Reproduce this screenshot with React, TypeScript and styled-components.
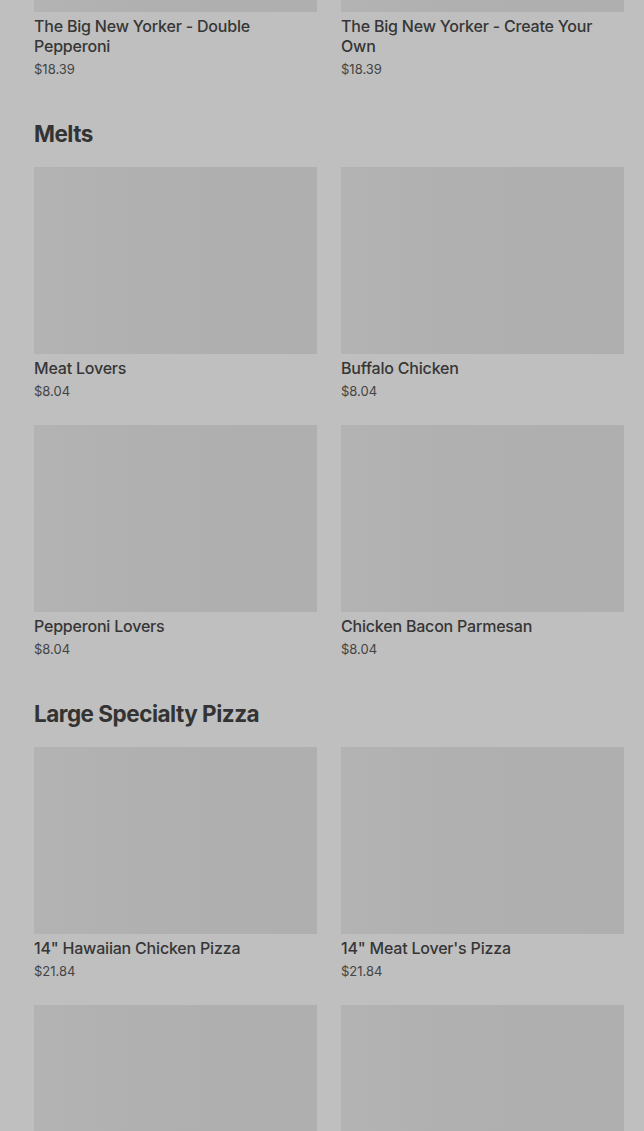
import styled, { createGlobalStyle } from 'styled-components';

const GlobalStyle = createGlobalStyle`
  html, body {
    margin: 0;
    padding: 0;
    background: #bfbfbf;
  }
  body {
    font-family: Inter, "Noto Sans", "Liberation Sans", sans-serif;
    overflow: hidden;
  }
`;

const Page = styled.main`
  width: 644px;
  height: 1131px;
  overflow: hidden;
  padding: 0 20px 0 34px;
  box-sizing: border-box;
  background: #bfbfbf;
`;

const Section = styled.section`
  margin-bottom: 39px;
`;

const Heading = styled.h2`
  margin: 0 0 17px;
  font-size: 22.5px;
  line-height: 32px;
  font-weight: 700;
  letter-spacing: -0.5px;
  color: #333333;
`;

const Grid = styled.div`
  display: grid;
  grid-template-columns: 283px 283px;
  column-gap: 24px;
  row-gap: 24px;
`;

const Card = styled.article`
  display: flex;
  flex-direction: column;
`;

const Thumb = styled.div<{ $height: number }>`
  height: ${({ $height }) => $height}px;
  background: linear-gradient(90deg, #b3b3b3 0%, #b0b0b0 40%, #afafaf 100%);
`;

const Name = styled.h3`
  margin: 4px 0 0;
  font-size: 16px;
  line-height: 20px;
  font-weight: 500;
  letter-spacing: -0.2px;
  color: #363636;
`;

const Price = styled.span`
  margin-top: 3px;
  font-size: 13px;
  line-height: 20px;
  color: #444444;
`;

interface Item {
  name?: string;
  price?: string;
}

const topItems: Item[] = [
  { name: 'The Big New Yorker - Double Pepperoni', price: '$18.39' },
  { name: 'The Big New Yorker - Create Your Own', price: '$18.39' },
];

const melts: Item[] = [
  { name: 'Meat Lovers', price: '$8.04' },
  { name: 'Buffalo Chicken', price: '$8.04' },
  { name: 'Pepperoni Lovers', price: '$8.04' },
  { name: 'Chicken Bacon Parmesan', price: '$8.04' },
];

// the last row runs past the bottom edge, only its pictures show
const specialty: Item[] = [
  { name: '14" Hawaiian Chicken Pizza', price: '$21.84' },
  { name: "14\" Meat Lover's Pizza", price: '$21.84' },
  {},
  {},
];

const MenuCard = ({ item, thumb = 187 }: { item: Item; thumb?: number }) => (
  <Card>
    <Thumb $height={thumb} />
    {item.name && <Name>{item.name}</Name>}
    {item.price && <Price>{item.price}</Price>}
  </Card>
);

export default function App() {
  return (
    <>
      <GlobalStyle />
      <Page>
        <Section>
          <Grid>
            {topItems.map((item, i) => (
              <MenuCard key={i} item={item} thumb={12} />
            ))}
          </Grid>
        </Section>
        <Section>
          <Heading>Melts</Heading>
          <Grid>
            {melts.map((item, i) => (
              <MenuCard key={i} item={item} />
            ))}
          </Grid>
        </Section>
        <Section>
          <Heading>Large Specialty Pizza</Heading>
          <Grid>
            {specialty.map((item, i) => (
              <MenuCard key={i} item={item} />
            ))}
          </Grid>
        </Section>
      </Page>
    </>
  );
}
